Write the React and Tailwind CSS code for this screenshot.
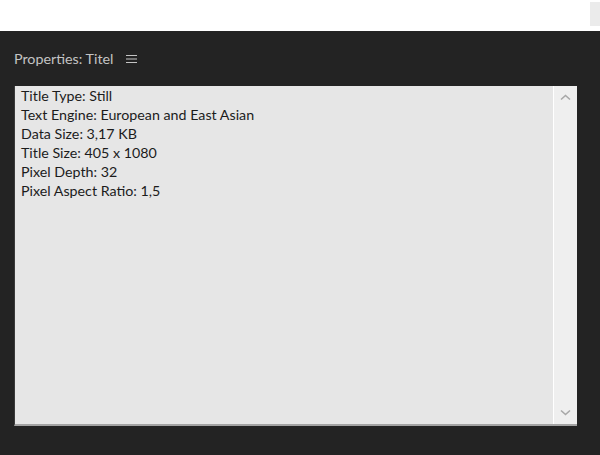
import React from "react"

const lines = [
  "Title Type: Still",
  "Text Engine: European and East Asian",
  "Data Size: 3,17 KB",
  "Title Size: 405 x 1080",
  "Pixel Depth: 32",
  "Pixel Aspect Ratio: 1,5",
]

const Chevron = ({ down }) => (
  <svg width="11" height="7" viewBox="0 0 11 7" className="text-[#a8a8a8]">
    <path
      d={down ? "M1 1.5 L5.5 5.5 L10 1.5" : "M1 5.5 L5.5 1.5 L10 5.5"}
      fill="none"
      stroke="currentColor"
      strokeWidth="1.6"
    />
  </svg>
)

const Menu = () => (
  <svg width="11" height="10" viewBox="0 0 11 10" className="text-[#c4c4c4]">
    <path d="M0 1.5 H11 M0 5 H11 M0 8.5 H11" stroke="currentColor" strokeWidth="1.2" />
  </svg>
)

export default function App() {
  return (
    <div className="w-[600px] h-[455px] flex flex-col bg-white font-['Lato',sans-serif]">
      {/* top strip */}
      <div className="h-[31px] flex justify-end pt-[2px]">
        <div className="w-[10px] h-[24px] bg-[#ebebeb]" />
      </div>

      {/* panel */}
      <div className="flex-1 bg-[#232323] flex flex-col px-[14px]">
        <div className="h-[55px] flex items-center gap-[13px] text-[#c4c4c4] text-[14.3px]">
          <span>Properties: Titel</span>
          <Menu />
        </div>

        {/* info box */}
        <div className="w-[563px] h-[340px] flex bg-[#e6e6e6] border-l border-[#3a3a3a] border-b-2 border-b-[#a3a3a3] rounded-tr-[2px]">
          <div className="flex-1 pl-[6px] text-[14.25px] leading-[19px] text-[#1c1c1c]">
            {lines.map((l) => (
              <div key={l}>{l}</div>
            ))}
          </div>
          <div className="w-[24px] flex flex-col items-center justify-between py-[8px] bg-[#efefef] border-l border-white">
            <Chevron />
            <Chevron down />
          </div>
        </div>
      </div>
    </div>
  )
}
